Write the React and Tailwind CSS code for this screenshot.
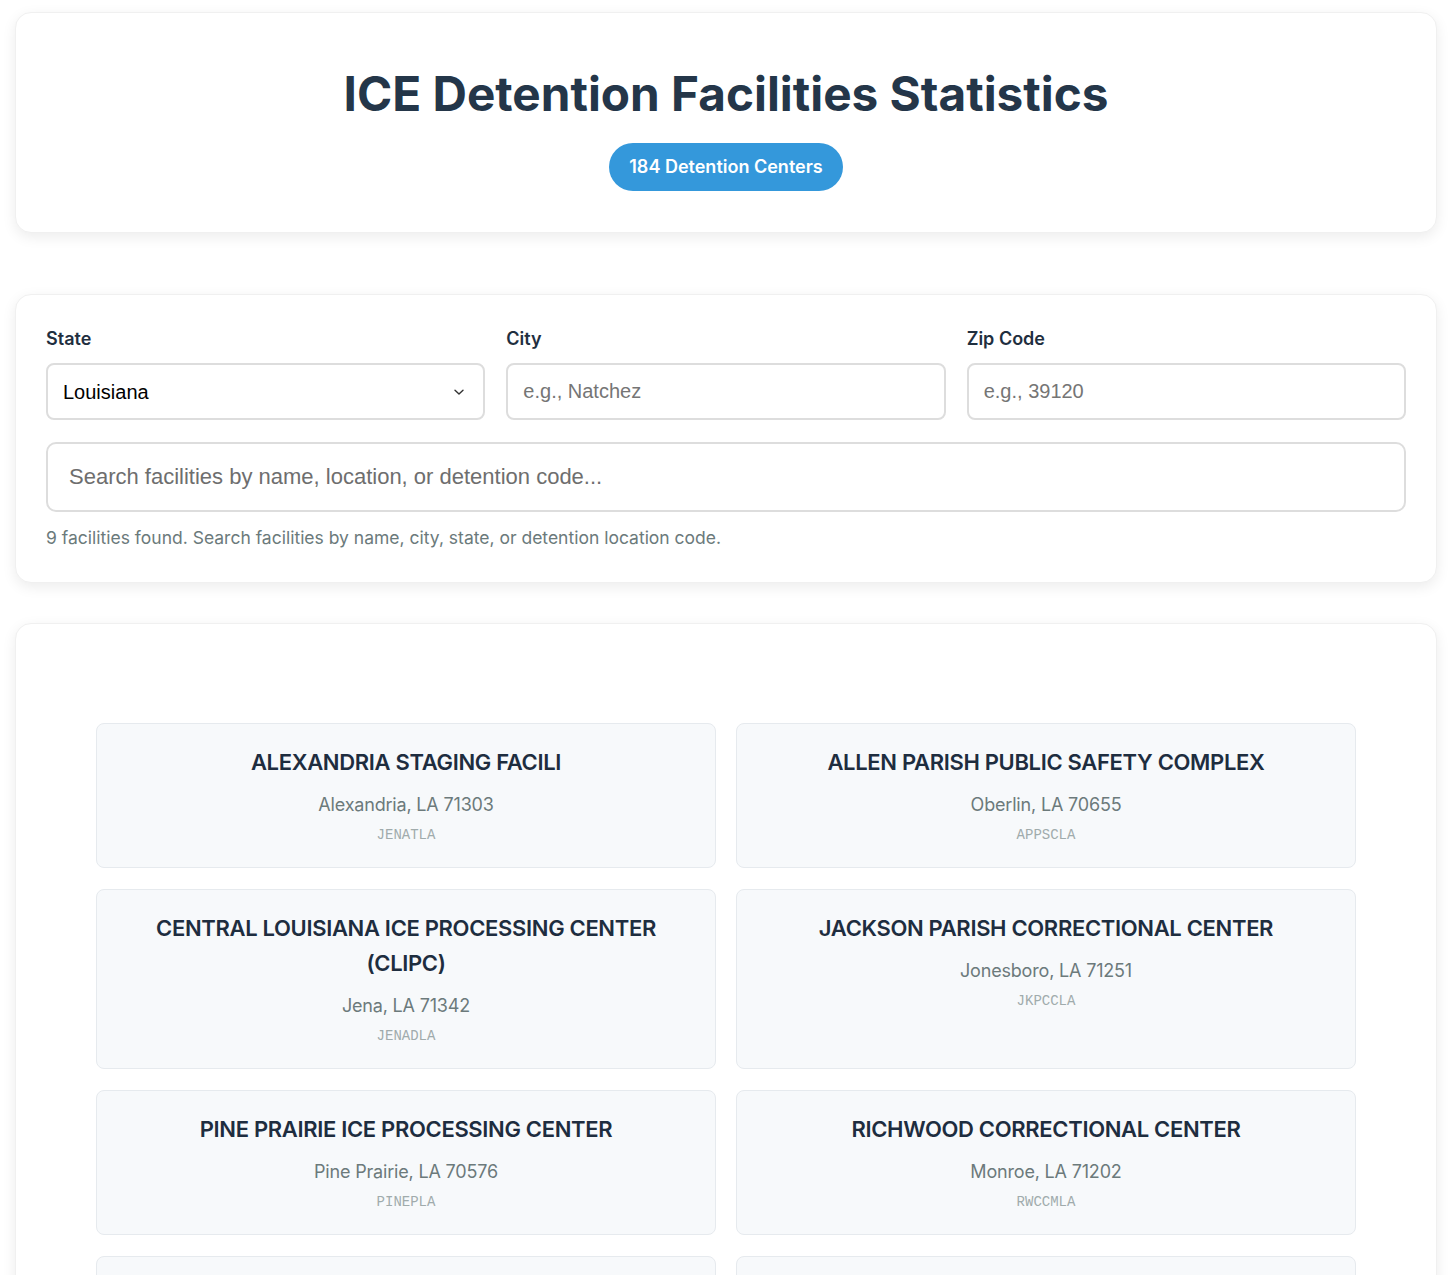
import React from "react";

const FACILITIES = [
  { name: "ALEXANDRIA STAGING FACILI", location: "Alexandria, LA 71303", code: "JENATLA" },
  { name: "ALLEN PARISH PUBLIC SAFETY COMPLEX", location: "Oberlin, LA 70655", code: "APPSCLA" },
  { name: "CENTRAL LOUISIANA ICE PROCESSING CENTER (CLIPC)", location: "Jena, LA 71342", code: "JENADLA" },
  { name: "JACKSON PARISH CORRECTIONAL CENTER", location: "Jonesboro, LA 71251", code: "JKPCCLA" },
  { name: "PINE PRAIRIE ICE PROCESSING CENTER", location: "Pine Prairie, LA 70576", code: "PINEPLA" },
  { name: "RICHWOOD CORRECTIONAL CENTER", location: "Monroe, LA 71202", code: "RWCCMLA" },
  { name: "RIVER CORRECTIONAL CENTER", location: "Ferriday, LA 71334", code: "RVRCCLA" },
  { name: "SOUTH LOUISIANA ICE PROCESSING CENTER", location: "Basile, LA 70515", code: "SLIPCLA" },
  { name: "WINN CORRECTIONAL CENTER", location: "Winnfield, LA 71483", code: "WINNCLA" },
];

const cardClass = "rounded-2xl bg-white shadow-[0_4px_14px_rgba(0,0,0,0.08)] border border-[#f0f0f0]";
const fieldClass =
  "w-full h-[57px] rounded-lg border-2 border-[#dddddd] bg-white px-[15px] text-[20px] text-black placeholder:text-[#757575] outline-none font-['Liberation_Sans',Arial,sans-serif]";

export default function App() {
  return (
    <div className="min-h-screen bg-white pl-[15px] pr-[19px] pt-[12px] font-['Inter','Liberation_Sans',sans-serif] text-[#2c3e50]">
      <header className={`${cardClass} flex flex-col items-center pt-[53px] pb-[41px]`}>
        <h1 className="text-[47.7px] font-bold leading-[1.2] text-[#243649]">
          ICE Detention Facilities Statistics
        </h1>
        <span className="mt-[20px] rounded-full bg-[#3498db] px-[20px] py-[12px] text-[18px] font-semibold leading-[24px] text-white">
          184 Detention Centers
        </span>
      </header>

      <section className={`${cardClass} mt-[61px] px-[30px] pt-[32px] pb-[31px]`}>
        <div className="grid grid-cols-3 gap-x-[21px]">
          <Field label="State">
            <div className="relative">
              <select defaultValue="Louisiana" className={`${fieldClass} appearance-none pr-10`}>
                <option>All States</option>
                <option>Louisiana</option>
              </select>
              <svg
                className="pointer-events-none absolute right-[20px] top-1/2 h-[12px] w-[12px] -translate-y-1/2 text-[#333]"
                viewBox="0 0 12 12"
                fill="none"
                stroke="currentColor"
                strokeWidth="1.4"
                strokeLinecap="round"
                strokeLinejoin="round"
              >
                <path d="M2 4.2 6 8l4-3.8" />
              </svg>
            </div>
          </Field>
          <Field label="City">
            <input type="text" placeholder="e.g., Natchez" className={fieldClass} />
          </Field>
          <Field label="Zip Code">
            <input type="text" placeholder="e.g., 39120" className={fieldClass} />
          </Field>
        </div>
        <input
          type="text"
          placeholder="Search facilities by name, location, or detention code..."
          className="mt-[22px] h-[70px] w-full rounded-[10px] border-2 border-[#dddddd] bg-white px-[21px] text-[22px] text-black placeholder:text-[#6e6e6e] outline-none font-['Liberation_Sans',Arial,sans-serif]"
        />
        <p className="mt-[13px] text-[17.5px] leading-[26px] text-[#6b7a7b]">
          9 facilities found. Search facilities by name, city, state, or detention location code.
        </p>
      </section>

      <section className={`${cardClass} mt-[40px] px-[80px] pt-[99px] pb-[60px]`}>
        <div className="grid grid-cols-2 gap-x-[20px] gap-y-[21px]">
          {FACILITIES.map((f) => (
            <FacilityCard key={f.code + f.name} {...f} />
          ))}
        </div>
      </section>
    </div>
  );
}

function Field({ label, children }) {
  return (
    <div>
      <label className="mb-[12px] block text-[18px] font-semibold leading-[24px] text-[#1f2f3f]">{label}</label>
      {children}
    </div>
  );
}

function FacilityCard({ name, location, code }) {
  return (
    <div className="rounded-lg border border-[#e6eaee] bg-[#f7f9fb] px-[20px] pt-[21px] pb-[21px] text-center">
      <h3 className="text-[22px] font-semibold leading-[35px] tracking-[-0.015em] text-[#1e2d3f]">{name}</h3>
      <p className="mt-[10px] text-[18px] leading-[29px] tracking-[-0.01em] text-[#6c7a7b]">{location}</p>
      <p className="mt-[5px] font-['Liberation_Mono','Courier_New',monospace] text-[14px] leading-[22px] text-[#a0abac]">
        {code}
      </p>
    </div>
  );
}
